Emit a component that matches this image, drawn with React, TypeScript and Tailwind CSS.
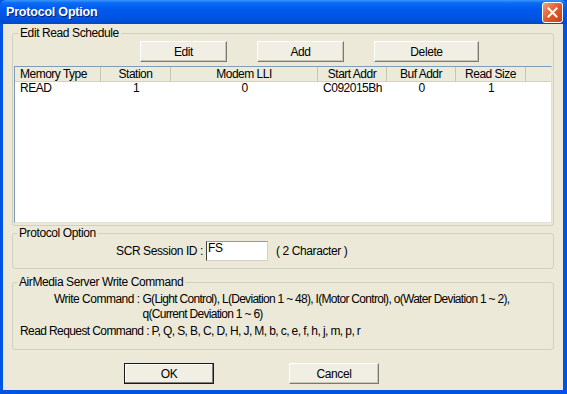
import React from "react";

const font = { fontFamily: '"Liberation Sans", Arial, sans-serif' };

type Col = { label: string; w: number; align: "left" | "center" };

const cols: Col[] = [
    { label: "Memory Type", w: 86, align: "left" },
    { label: "Station", w: 70, align: "center" },
    { label: "Modem LLI", w: 147, align: "center" },
    { label: "Start Addr", w: 69, align: "center" },
    { label: "Buf Addr", w: 69, align: "center" },
    { label: "Read Size", w: 70, align: "center" },
];

const rows = [["READ", "1", "0", "C092015Bh", "0", "1"]];

const Button = ({ label, w, def }: { label: string; w: string; def?: boolean }) => (
    <button
        className={`${w} h-[21px] text-[12px] tracking-[-0.4px] text-black bg-[#F1EFE4] border ${
            def
                ? "border-[#1a1a1a] shadow-[inset_-1px_-1px_0_#808080,inset_1px_1px_0_#ffffff]"
                : "border-t-white border-l-white border-r-[#7a7a6e] border-b-[#7a7a6e] shadow-[inset_-1px_-1px_0_#c9c6b5]"
        }`}
    >
        {label}
    </button>
);

const Group = ({ title, className, children }: { title: string; className?: string; children: React.ReactNode }) => (
    <fieldset className={`border border-[#D0D0BF] rounded-[3px] mx-[9px] ${className ?? ""}`}>
        <legend className="ml-[4px] px-[2px] text-[12px] leading-[13px] tracking-[-0.4px] text-black">{title}</legend>
        {children}
    </fieldset>
);

export default function App() {
    return (
        <div style={font} className="w-[567px] h-[394px] flex flex-col bg-[#0054E3] overflow-hidden">
            {/* title bar */}
            <div className="h-[24px] flex items-center justify-between pl-[6px] pr-[4px] bg-[linear-gradient(#3D95FF_0%,#0A6CF5_12%,#0058EE_40%,#0054E3_75%,#0048C8_100%)] rounded-t-[6px]">
                <span className="text-white font-bold text-[12.5px] tracking-[-0.2px] [text-shadow:1px_1px_0_#0A1E6E]">
                    Protocol Option
                </span>
                <div className="w-[21px] h-[21px] rounded-[3px] border border-white bg-[linear-gradient(135deg,#F0A080,#E25A2C_50%,#C8401A)] flex items-center justify-center">
                    <svg width="11" height="11" viewBox="0 0 11 11">
                        <path d="M1.5 1.5 L9.5 9.5 M9.5 1.5 L1.5 9.5" stroke="white" strokeWidth="2" strokeLinecap="square" />
                    </svg>
                </div>
            </div>

            {/* body */}
            <div className="flex-1 ml-[3px] mr-[4px] mb-[4px] bg-[#ECE9D8] flex flex-col pt-[3px] text-black">
                <Group title="Edit Read Schedule" className="h-[199px] px-[1px]">
                    <div className="flex gap-[30px] pl-[126px] pt-[1px]">
                        <Button label="Edit" w="w-[87px]" />
                        <Button label="Add" w="w-[87px]" />
                        <Button label="Delete" w="w-[105px]" />
                    </div>
                    <div className="mt-[4px] h-[157px] bg-white border border-t-[#7F9DB9] border-l-[#7F9DB9] border-r-[#E3E1D5] border-b-[#E3E1D5] text-[12px] tracking-[-0.5px] leading-[13px]">
                        <div className="flex h-[15px] bg-[#EBEADB] border-b border-[#D6D2C2]">
                            {cols.map((c) => (
                                <div
                                    key={c.label}
                                    style={{ width: c.w }}
                                    className={`border-r border-[#C7C5B2] pt-[1px] ${c.align === "left" ? "pl-[5px]" : "text-center"}`}
                                >
                                    {c.label}
                                </div>
                            ))}
                        </div>
                        {rows.map((r, i) => (
                            <div key={i} className="flex h-[13px]">
                                {r.map((v, j) => (
                                    <div
                                        key={j}
                                        style={{ width: cols[j].w }}
                                        className={cols[j].align === "left" ? "pl-[5px]" : "text-center"}
                                    >
                                        {v}
                                    </div>
                                ))}
                            </div>
                        ))}
                    </div>
                </Group>

                <Group title="Protocol Option" className="mt-[1px] h-[42px]">
                    <div className="flex items-center text-[12px] tracking-[-0.4px] h-[22px]">
                        <span className="ml-[98px] w-[95px] text-right pr-[3px]">SCR Session ID :</span>
                        <div className="w-[62px] h-[20px] bg-white border border-t-[#7F9DB9] border-l-[#404040] border-r-[#D4D0C8] border-b-[#D4D0C8] leading-[12px] pl-[1px]">
                            FS
                        </div>
                        <span className="ml-[8px]">( 2 Character )</span>
                    </div>
                </Group>

                <Group title="AirMedia Server Write Command" className="mt-[7px] h-[74px] text-[12px] tracking-[-0.5px] leading-[15px]">
                    <div className="flex pl-[41px] pt-[3px]">
                        <span className="whitespace-nowrap">Write Command :&nbsp;</span>
                        <span className="flex flex-col whitespace-nowrap tracking-[-0.7px]">
                            <span>G(Light Control), L(Deviation 1 ~ 48), I(Motor Control), o(Water Deviation 1 ~ 2),</span>
                            <span>q(Current Deviation 1 ~ 6)</span>
                        </span>
                    </div>
                    <div className="pl-[7px] pt-[2px] tracking-[-0.6px]">
                        Read Request Command : P, Q, S, B, C, D, H, J, M, b, c, e, f, h, j, m, p, r
                    </div>
                </Group>

                <div className="flex gap-[75px] pl-[121px] pt-[13px]">
                    <Button label="OK" w="w-[90px]" def />
                    <Button label="Cancel" w="w-[90px]" />
                </div>
            </div>
        </div>
    );
}
